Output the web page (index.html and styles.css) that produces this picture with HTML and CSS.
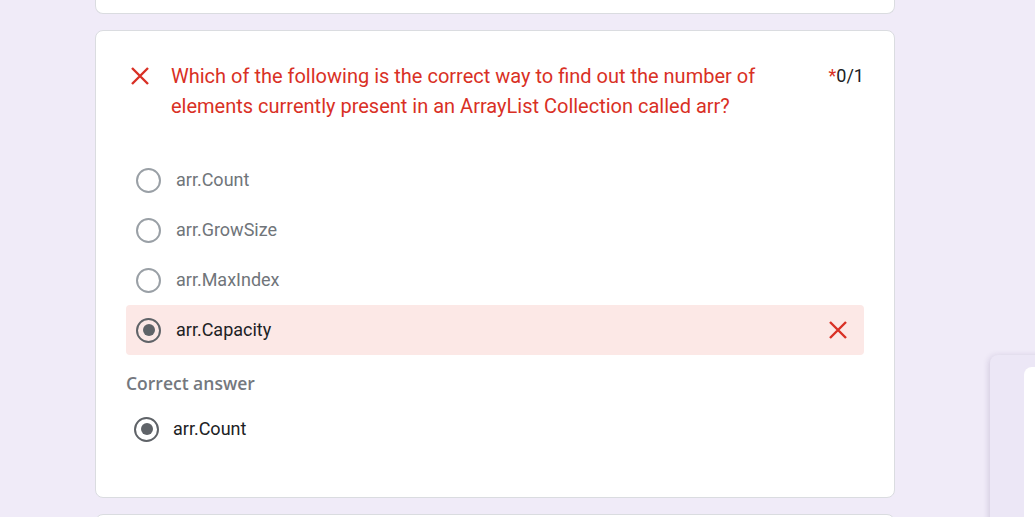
FILE: index.html
```html
<!DOCTYPE html>
<html lang="en">
<head>
<meta charset="utf-8">
<title>Quiz result</title>
<link rel="stylesheet" href="styles.css">
</head>
<body>
<main class="column">
  <section class="card card-prev"></section>

  <section class="card question-card">
    <div class="q-header">
      <svg class="x-icon" viewBox="0 0 20 20" width="20" height="20" aria-hidden="true">
        <path d="M2 2 L18 18 M18 2 L2 18" stroke="#d93025" stroke-width="2.4" fill="none"/>
      </svg>
      <div class="q-title">Which of the following is the correct way to find out the number of elements currently present in an ArrayList Collection called arr?</div>
      <div class="q-points"><span class="req">*</span>0/1</div>
    </div>

    <div class="options">
      <div class="opt"><span class="radio"></span><span class="opt-label">arr.Count</span></div>
      <div class="opt"><span class="radio"></span><span class="opt-label">arr.GrowSize</span></div>
      <div class="opt"><span class="radio"></span><span class="opt-label">arr.MaxIndex</span></div>
      <div class="opt opt-wrong"><span class="radio radio-on"></span><span class="opt-label">arr.Capacity</span>
        <svg class="x-icon x-right" viewBox="0 0 20 20" width="20" height="20" aria-hidden="true">
          <path d="M2 2 L18 18 M18 2 L2 18" stroke="#d93025" stroke-width="2.4" fill="none"/>
        </svg>
      </div>
    </div>

    <div class="correct-head">Correct answer</div>
    <div class="opt opt-correct"><span class="radio radio-on"></span><span class="opt-label">arr.Count</span></div>
  </section>

  <section class="card card-next"></section>
</main>

<aside class="side-panel">
  <div class="side-inner"></div>
</aside>
</body>
</html>
```

FILE: styles.css
```css
* { box-sizing: border-box; }

html, body {
  margin: 0;
  height: 100%;
  overflow: hidden;
}

body {
  background: #f0ebf8;
  font-family: Roboto, "Liberation Sans", Arial, sans-serif;
  color: #202124;
}

.column {
  display: flex;
  flex-direction: column;
  gap: 16px;
  padding-left: 95px;
  width: 895px;
}

.card {
  background: #fff;
  border: 1px solid #dadce0;
  border-radius: 8px;
  width: 800px;
}

.card-prev {
  height: 14px;
  border-top: none;
  border-radius: 0 0 8px 8px;
}

.card-next {
  height: 40px;
}

.question-card {
  padding: 30px 30px 44px 30px;
}

.q-header {
  display: flex;
  align-items: flex-start;
  padding-left: 4px;
  padding-right: 0;
}

.x-icon {
  flex: none;
  display: block;
}

.q-header .x-icon {
  margin-top: 5px;
  margin-right: 21px;
}

.q-title {
  flex: 1;
  font-size: 20px;
  line-height: 30px;
  color: #d93025;
  padding-right: 40px;
}

.q-points {
  flex: none;
  font-size: 18px;
  line-height: 30px;
  color: #202124;
}

.req { color: #d93025; }

.options {
  margin-top: 34px;
  display: flex;
  flex-direction: column;
}

.opt {
  display: flex;
  align-items: center;
  height: 50px;
  padding-left: 10px;
  padding-right: 16px;
  gap: 15px;
  border-radius: 4px;
}

.radio {
  flex: none;
  width: 25px;
  height: 25px;
  border: 2px solid #9aa0a6;
  border-radius: 50%;
  display: flex;
  align-items: center;
  justify-content: center;
}

.radio-on { border-color: #5f6368; }

.radio-on::after {
  content: "";
  width: 12px;
  height: 12px;
  border-radius: 50%;
  background: #5f6368;
}

.opt-label {
  font-size: 18px;
  color: #70757a;
  padding-bottom: 2px;
}

.opt-wrong {
  background: #fce8e6;
}

.opt-wrong .opt-label,
.opt-correct .opt-label {
  color: #202124;
}

.x-right { margin-left: auto; }

.correct-head {
  margin-top: 16px;
  font-family: "Open Sans", Roboto, sans-serif;
  font-weight: 600;
  font-size: 17.5px;
  line-height: 24px;
  color: #74787e;
  padding-bottom: 1px;
}

.opt-correct {
  margin-top: 9px;
  height: 48px;
  padding-left: 8px;
  gap: 14px;
}

.side-panel {
  position: absolute;
  left: 990px;
  top: 355px;
  width: 60px;
  height: 200px;
  background: #ece7f6;
  border-radius: 8px 0 0 0;
  box-shadow: -1px 1px 6px rgba(60, 40, 100, 0.18);
  padding: 12px 0 0 34px;
}

.side-inner {
  background: #fff;
  height: 100%;
  border-radius: 8px 0 0 0;
}
```
